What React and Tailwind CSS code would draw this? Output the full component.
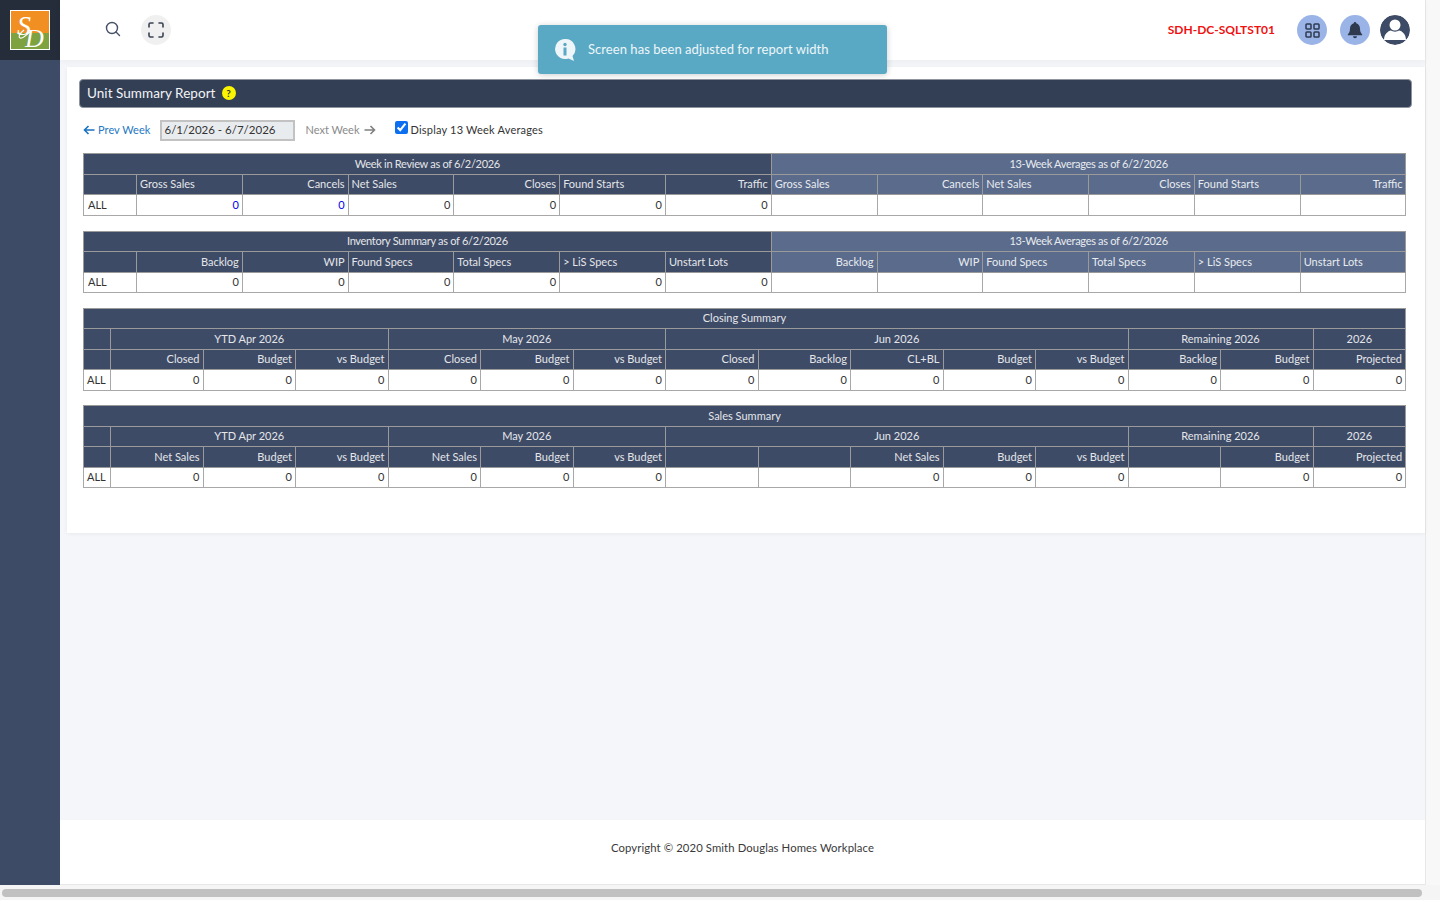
import React from "react";

const hb = "border border-[#9a9a9a] bg-[#3e4b66] text-[#e4e6ea] font-normal px-[3px] h-[20.5px] leading-[14px] overflow-hidden whitespace-nowrap";
const hl = "border border-[#9a9a9a] bg-[#5a6b8c] text-[#e9ebef] font-normal px-[3px] h-[20.5px] leading-[14px] overflow-hidden whitespace-nowrap";
const td = "border border-[#a8a8a8] bg-white text-[#333] px-[3px] h-[20.5px] leading-[14px] text-right";

function WeekTable({ title, avgTitle, cols, blue, mb }) {
  return (
    <table className={"w-[1322.5px] table-fixed border-collapse text-[11px] " + mb}>
      <colgroup>
        <col className="w-[53px]" />
        {Array.from({ length: 12 }).map((_, i) => (
          <col key={i} className="w-[105.79px]" />
        ))}
      </colgroup>
      <thead>
        <tr>
          <th colSpan={7} className={hb + " text-center tracking-[-0.3px]"}>{title}</th>
          <th colSpan={6} className={hl + " text-center tracking-[-0.3px]"}>{avgTitle}</th>
        </tr>
        <tr>
          <th className={hb}></th>
          {cols.map((c, i) => (
            <th key={i} className={hb + (c[1] ? " text-right" : " text-left")}>{c[0]}</th>
          ))}
          {cols.map((c, i) => (
            <th key={i} className={hl + (c[1] ? " text-right" : " text-left")}>{c[0]}</th>
          ))}
        </tr>
      </thead>
      <tbody>
        <tr>
          <td className={td + " !text-left pl-[4px]"}>ALL</td>
          {cols.map((c, i) => (
            <td key={i} className={td + (blue && i < 2 ? " !text-[#0000ee]" : "")}>0</td>
          ))}
          {cols.map((c, i) => (
            <td key={i} className={td}></td>
          ))}
        </tr>
      </tbody>
    </table>
  );
}

function MonthTable({ title, cols, mb }) {
  const groups = [["YTD Apr 2026", 3], ["May 2026", 3], ["Jun 2026", 5], ["Remaining 2026", 2], ["2026", 1]];
  return (
    <table className={"w-[1322px] table-fixed border-collapse text-[11px] " + mb}>
      <colgroup>
        <col className="w-[27px]" />
        {Array.from({ length: 14 }).map((_, i) => (
          <col key={i} className="w-[92.5px]" />
        ))}
      </colgroup>
      <thead>
        <tr>
          <th colSpan={15} className={hb + " text-center"}>{title}</th>
        </tr>
        <tr>
          <th className={hb}></th>
          {groups.map((g) => (
            <th key={g[0]} colSpan={g[1]} className={hb + " text-center"}>{g[0]}</th>
          ))}
        </tr>
        <tr>
          <th className={hb}></th>
          {cols.map((c, i) => (
            <th key={i} className={hb + " text-right"}>{c}</th>
          ))}
        </tr>
      </thead>
      <tbody>
        <tr>
          <td className={td + " !text-left"}>ALL</td>
          {cols.map((c, i) => (
            <td key={i} className={td}>{c ? "0" : ""}</td>
          ))}
        </tr>
      </tbody>
    </table>
  );
}

const weekCols = [["Gross Sales"], ["Cancels", 1], ["Net Sales"], ["Closes", 1], ["Found Starts"], ["Traffic", 1]];
const invCols = [["Backlog", 1], ["WIP", 1], ["Found Specs"], ["Total Specs"], ["> LiS Specs"], ["Unstart Lots"]];
const closing = ["Closed", "Budget", "vs Budget", "Closed", "Budget", "vs Budget", "Closed", "Backlog", "CL+BL", "Budget", "vs Budget", "Backlog", "Budget", "Projected"];
const sales = ["Net Sales", "Budget", "vs Budget", "Net Sales", "Budget", "vs Budget", "", "", "Net Sales", "Budget", "vs Budget", "", "Budget", "Projected"];

function Logo() {
  return (
    <svg width="40" height="40" viewBox="0 0 40 40">
      <rect width="40" height="40" fill="#fff" />
      <rect x="1" y="1" width="38" height="22" fill="#f28f22" />
      <rect x="1" y="23" width="38" height="16" fill="#7da23f" />
      <text x="7" y="25" fontFamily="'Liberation Serif',serif" fontStyle="italic" fontSize="28" fill="#fff">S</text>
      <text x="15" y="37" fontFamily="'Liberation Serif',serif" fontStyle="italic" fontSize="26" fill="#fff">D</text>
      <path d="M14 20c-4 3-6 7-4 8 3 1 7-4 10-6" fill="none" stroke="#fff" strokeWidth="1.1" />
    </svg>
  );
}

export default function App() {
  return (
    <div className="relative w-[1440px] h-[900px] overflow-hidden bg-[#f8f8f8] flex font-['Lato','Noto_Sans',sans-serif]">
      <aside className="w-[60px] h-[885px] shrink-0 bg-[#3e4b66]">
        <div className="h-[60px] bg-[#252d3a] flex items-center justify-center">
          <Logo />
        </div>
      </aside>

      <div className="w-[1366px] h-[885px] shrink-0 flex flex-col bg-[#f5f6fa] border-r border-[#e8e8e8]">
        <header className="h-[60px] shrink-0 bg-white flex items-center pl-[45px] pr-[15px] shadow-[0_2px_6px_rgba(0,0,0,0.04)]">
          <svg width="16" height="16" viewBox="0 0 16 16" fill="none" stroke="#475066" strokeWidth="1.4" strokeLinecap="round" className="-mt-[2px]">
            <circle cx="7" cy="7" r="5.5" />
            <path d="M11 11l3.5 3.5" />
          </svg>
          <div className="ml-[20px] w-[30px] h-[30px] rounded-full bg-[#f0f0f0] flex items-center justify-center">
            <svg width="16" height="16" viewBox="0 0 16 16" fill="none" stroke="#3a4252" strokeWidth="1.6" strokeLinecap="round">
              <path d="M1 5V2.5A1.5 1.5 0 0 1 2.5 1H5M11 1h2.5A1.5 1.5 0 0 1 15 2.5V5M15 11v2.5a1.5 1.5 0 0 1-1.500 1.500H11M5 15H2.500A1.500 1.500 0 0 1 1 13.500V11" />
            </svg>
          </div>
          <div className="ml-auto flex items-center">
            <span className="text-[12px] font-bold text-[#f01010] mr-[22px]">SDH-DC-SQLTST01</span>
            <div className="w-[30px] h-[30px] rounded-full bg-[#9ab4e8] flex items-center justify-center">
              <svg width="15" height="15" viewBox="0 0 15 15" fill="none" stroke="#2f3a4f" strokeWidth="1.5">
                <rect x="1" y="1" width="5" height="5" rx="0.8" />
                <rect x="9" y="1" width="5" height="5" rx="0.8" />
                <rect x="1" y="9" width="5" height="5" rx="0.8" />
                <rect x="9" y="9" width="5" height="5" rx="0.8" />
              </svg>
            </div>
            <div className="ml-[13px] w-[30px] h-[30px] rounded-full bg-[#9ab4e8] flex items-center justify-center">
              <svg width="16" height="18" viewBox="0 0 16 18" fill="#2f3a4f">
                <path d="M8 1a1.200 1.200 0 0 1 1.200 1.300C11.600 3 13 5 13 7.500c0 3 .8 4.500 2.200 6v.8H.8v-.8C2.200 12 3 10.500 3 7.500 3 5 4.400 3 6.800 2.300A1.200 1.200 0 0 1 8 1z" />
                <path d="M6 15.300h4a2 2 0 0 1-4 0z" />
              </svg>
            </div>
            <div className="ml-[10px] w-[30px] h-[30px] rounded-full overflow-hidden">
              <svg width="30" height="30" viewBox="0 0 30 30">
                <circle cx="15" cy="15" r="15" fill="#3e4b66" />
                <ellipse cx="15" cy="10" rx="5.500" ry="5.500" fill="#fff" />
                <path d="M4 25c0-6 4-9 7-9.500 2 1.500 6 1.500 8 0 3 .5 7 3.500 7 9.500z" fill="#fff" />
              </svg>
            </div>
          </div>
        </header>

        <main className="flex-1 pt-[7px] pl-[7px]">
          <section className="h-[466px] bg-white pt-[13px] pl-[12px] pr-[13px] shadow-[0_1px_4px_rgba(0,0,0,0.05)]">
            <div className="h-[29px] bg-[#333f55] border border-[#8f949e] rounded-[4px] flex items-center pl-[7px] pb-[1px] text-[13.5px] text-[#f2f3f5] tracking-[0.05px] -mt-[1px]">
              Unit Summary Report
              <span className="ml-[6px] w-[14px] h-[14px] rounded-full bg-[#fbf500] text-[#333] text-[10px] font-bold flex items-center justify-center">?</span>
            </div>
            <div className="h-[45px] pl-[4px] flex items-center text-[11px]">
              <svg width="12" height="10" viewBox="0 0 12 10" fill="none" stroke="#1a72c4" strokeWidth="1.600" className="-mt-[1px]">
                <path d="M11.500 5H1.500M5.500 1L1.500 5l4 4" />
              </svg>
              <span className="ml-[3px] text-[#2478c4] tracking-[0.05px]">Prev Week</span>
              <div className="ml-[10px] -mt-[1px] w-[135px] h-[21px] bg-[#e9ecef] border-2 border-[#c2c2c2] text-[11.500px] text-[#333] flex items-center pl-[2px]">6/1/2026 - 6/7/2026</div>
              <span className="ml-[10px] text-[#8a8a8a]">Next Week</span>
              <svg width="12" height="10" viewBox="0 0 12 10" fill="none" stroke="#808080" strokeWidth="1.600" className="ml-[4px] -mt-[1px]">
                <path d="M.5 5h10M6.500 1l4 4-4 4" />
              </svg>
              <input type="checkbox" defaultChecked readOnly className="ml-[19px] w-[13px] h-[13px] -mt-[6px] accent-[#0b6ff0]" />
              <span className="ml-[3px] text-[#333] tracking-[0.2px]">Display 13 Week Averages</span>
            </div>
            <div className="pl-[4px]">
              <WeekTable title="Week in Review as of 6/2/2026" avgTitle="13-Week Averages as of 6/2/2026" cols={weekCols} blue mb="mb-[15px]" />
              <WeekTable title="Inventory Summary as of 6/2/2026" avgTitle="13-Week Averages as of 6/2/2026" cols={invCols} mb="mb-[14.5px]" />
              <MonthTable title="Closing Summary" cols={closing} mb="mb-[14.5px]" />
              <MonthTable title="Sales Summary" cols={sales} mb="" />
            </div>
          </section>
        </main>

        <footer className="h-[65px] shrink-0 bg-white pl-[551px] pt-[20px] text-[11.300px] text-[#3a3a3a] tracking-[0.1px] border-b border-[#e8e8e8]">
          Copyright © 2020 Smith Douglas Homes Workplace
        </footer>
      </div>

      <div className="absolute left-[538px] top-[25px] w-[349px] h-[49px] rounded-[3px] bg-[#5aa9c4] shadow-[0_1px_6px_rgba(0,0,0,0.2)] flex items-center pl-[16px] text-[13px] text-[#eef6f9] tracking-[0.05px]">
        <svg width="22" height="24" viewBox="0 0 22 24" className="shrink-0">
          <path d="M11 1a10 10 0 1 0 3.500 19.400L20 23l-1.500-5A10 10 0 0 0 11 1z" fill="#eef6f9" />
          <circle cx="11" cy="6.500" r="1.700" fill="#5aa9c4" />
          <rect x="9.500" y="9.500" width="3" height="8" fill="#5aa9c4" />
        </svg>
        <span className="ml-[12px]">Screen has been adjusted for report width</span>
      </div>

      <div className="absolute left-0 top-[885px] w-[1440px] h-[15px] bg-[#f5f5f5]">
        <div className="ml-[2px] mt-[4px] w-[1420px] h-[8px] rounded-full bg-[#c1c1c1]"></div>
      </div>
    </div>
  );
}
